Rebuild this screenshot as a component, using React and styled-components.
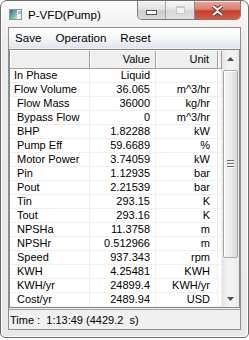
import React from 'react';
import styled, { createGlobalStyle } from 'styled-components';

const GlobalStyle = createGlobalStyle`
  html, body {
    margin: 0;
    padding: 0;
    background: #fff;
  }
  body {
    font-family: "Liberation Sans", Arial, sans-serif;
  }
`;

const rows = [
  { name: 'In Phase', value: 'Liquid', unit: '', indent: false },
  { name: 'Flow Volume', value: '36.065', unit: 'm^3/hr', indent: false },
  { name: 'Flow Mass', value: '36000', unit: 'kg/hr', indent: true },
  { name: 'Bypass Flow', value: '0', unit: 'm^3/hr', indent: true },
  { name: 'BHP', value: '1.82288', unit: 'kW', indent: true },
  { name: 'Pump Eff', value: '59.6689', unit: '%', indent: true },
  { name: 'Motor Power', value: '3.74059', unit: 'kW', indent: true },
  { name: 'Pin', value: '1.12935', unit: 'bar', indent: true },
  { name: 'Pout', value: '2.21539', unit: 'bar', indent: true },
  { name: 'Tin', value: '293.15', unit: 'K', indent: true },
  { name: 'Tout', value: '293.16', unit: 'K', indent: true },
  { name: 'NPSHa', value: '11.3758', unit: 'm', indent: true },
  { name: 'NPSHr', value: '0.512966', unit: 'm', indent: true },
  { name: 'Speed', value: '937.343', unit: 'rpm', indent: true },
  { name: 'KWH', value: '4.25481', unit: 'KWH', indent: true },
  { name: 'KWH/yr', value: '24899.4', unit: 'KWH/yr', indent: true },
  { name: 'Cost/yr', value: '2489.94', unit: 'USD', indent: true },
];

const Window = styled.div`
  box-sizing: border-box;
  width: 249px;
  height: 338px;
  border: 1px solid #6c6c6c;
  border-radius: 7px 7px 5px 5px;
  background: linear-gradient(#fbfbfb, #ececec 40px, #e9e9e9);
  box-shadow: inset 1px 1px 0 #fff, inset -1px -1px 0 #fff;
  padding: 0 7px 7px 7px;
  display: flex;
  flex-direction: column;
`;

const TitleBar = styled.div`
  height: 28px;
  display: flex;
  align-items: center;
`;

const AppIcon = styled.svg`
  margin-left: 1px;
  margin-top: 1px;
  flex: none;
`;

const Title = styled.span`
  margin-left: 6px;
  margin-top: 1px;
  font-size: 11.6px;
  color: #000;
  flex: 1;
`;

const CaptionGroup = styled.div`
  align-self: flex-start;
  display: flex;
  height: 18px;
  border: 1px solid #7a7a7a;
  border-top: none;
  border-radius: 0 0 5px 5px;
  overflow: hidden;
`;

const CaptionButton = styled.div`
  width: ${(p) => p.w}px;
  height: 18px;
  display: flex;
  align-items: center;
  justify-content: center;
  border-left: ${(p) => (p.first ? 'none' : '1px solid #8a8a8a')};
  background: ${(p) =>
    p.close
      ? 'linear-gradient(#eaa59b, #dd8272 45%, #c8402c 55%, #d35a44)'
      : 'linear-gradient(#f4f4f4, #e2e2e2 45%, #cdcdcd 55%, #d8d8d8)'};
  box-shadow: inset 0 1px 0 rgba(255, 255, 255, 0.7);
  opacity: ${(p) => (p.disabled ? 0.75 : 1)};
`;

const MinGlyph = styled.div`
  width: 9px;
  height: 3px;
  margin-top: 4px;
  background: #fff;
  border: 1px solid #555;
`;

const MaxGlyph = styled.div`
  width: 7px;
  height: 5px;
  border: 1px solid #b8b8b8;
  border-top-width: 2px;
  background: #f0f0f0;
`;

const Client = styled.div`
  flex: 1;
  display: flex;
  flex-direction: column;
  border: 1px solid #8e8f8f;
  background: #f0f0f0;
`;

const MenuBar = styled.div`
  height: 19px;
  display: flex;
  align-items: center;
  gap: 14px;
  padding-left: 6px;
  background: linear-gradient(#ffffff, #f6f7fa 50%, #e2e6ee);
  border-bottom: 1px solid #dfe3ea;
`;

const MenuItem = styled.span`
  font-size: 11.6px;
  color: #000;
`;

const ListView = styled.div`
  flex: 1;
  display: flex;
  margin-top: 1px;
  border: 1px solid #828790;
  background: #fff;
`;

const Table = styled.div`
  flex: 1;
  display: flex;
  flex-direction: column;
`;

const HeaderRow = styled.div`
  display: grid;
  grid-template-columns: 80px 66px 62px 1fr;
  height: 17px;
  border-bottom: 1px solid #a0a0a0;
  border-top: 1px solid #fff;
  background: #efefef;
`;

const HeaderCell = styled.div`
  font-size: 11px;
  line-height: 17px;
  text-align: right;
  padding-right: ${(p) => p.pad || 0}px;
  border-right: 1px solid #a0a0a0;
  box-shadow: inset 1px 0 0 #fff;
  color: #000;
`;

const Row = styled.div`
  display: grid;
  grid-template-columns: 80px 66px 62px 1fr;
  height: 14px;
`;

const Cell = styled.div`
  box-sizing: border-box;
  font-size: 11px;
  line-height: 13px;
  color: #000;
  white-space: nowrap;
  overflow: hidden;
  border-right: 1px solid #f0f0f0;
  border-bottom: 1px solid #f0f0f0;
  text-align: ${(p) => (p.right ? 'right' : 'left')};
  padding-left: ${(p) => p.left || 0}px;
  padding-right: ${(p) => p.pad || 0}px;
`;

const ScrollBar = styled.div`
  width: 17px;
  display: flex;
  flex-direction: column;
  background: linear-gradient(90deg, #e3e3e3, #f2f2f2 30%, #f2f2f2 70%, #e8e8e8);
`;

const ArrowButton = styled.div`
  height: 17px;
  display: flex;
  align-items: center;
  justify-content: center;
`;

const Track = styled.div`
  flex: 1;
  display: flex;
  flex-direction: column;
`;

const Thumb = styled.div`
  margin: 3px 1px 0 1px;
  height: 186px;
  border: 1px solid #a7a7a7;
  border-radius: 2px;
  background: linear-gradient(90deg, #f2f2f2, #ebebeb 50%, #d9d9d9);
  box-shadow: inset 1px 1px 0 #fff;
  display: flex;
  flex-direction: column;
  align-items: center;
  justify-content: center;
  gap: 1px;
`;

const Grip = styled.div`
  width: 7px;
  height: 1px;
  background: #6a6a6a;
  border-bottom: 1px solid #fff;
`;

const StatusBar = styled.div`
  height: 18px;
  display: flex;
  align-items: center;
  padding-left: 1px;
  padding-top: 1px;
  border-top: 1px solid #a0a0a0;
  margin-top: 1px;
  font-size: 11px;
  white-space: pre;
  color: #000;
`;

const Arrow = ({ up }) => (
  <svg width="7" height="4" viewBox="0 0 7 4">
    <path d={up ? 'M0 4 L3.5 0 L7 4 Z' : 'M0 0 L3.5 4 L7 0 Z'} fill="#4d4d4d" />
  </svg>
);

const App = () => (
  <>
    <GlobalStyle />
    <Window>
      <TitleBar>
        <AppIcon width="13" height="11" viewBox="0 0 13 11">
          <defs>
            <linearGradient id="ic" x1="0" y1="0" x2="1" y2="1">
              <stop offset="0" stopColor="#2b6f8f" />
              <stop offset="0.6" stopColor="#79b9a8" />
              <stop offset="1" stopColor="#bcd9e8" />
            </linearGradient>
          </defs>
          <rect x="0.5" y="0.5" width="12" height="10" fill="#eef1f3" stroke="#8a96a0" />
          <rect x="1" y="1" width="7" height="9" fill="url(#ic)" />
          <rect x="9" y="2" width="3" height="3" fill="#9fc4d6" />
        </AppIcon>
        <Title>P-VFD(Pump)</Title>
        <CaptionGroup>
          <CaptionButton w={27} first>
            <MinGlyph />
          </CaptionButton>
          <CaptionButton w={28} disabled>
            <MaxGlyph />
          </CaptionButton>
          <CaptionButton w={45} close>
            <svg width="13" height="11" viewBox="0 0 13 11">
              <path
                d="M2 1 L6.5 4.5 L11 1 M2 10 L6.5 6.5 L11 10"
                stroke="#5a2a22"
                strokeWidth="4"
                fill="none"
              />
              <path
                d="M2 1 L6.5 4.5 L11 1 M2 10 L6.5 6.5 L11 10"
                stroke="#fff"
                strokeWidth="2.2"
                fill="none"
              />
            </svg>
          </CaptionButton>
        </CaptionGroup>
      </TitleBar>
      <Client>
        <MenuBar>
          <MenuItem>Save</MenuItem>
          <MenuItem>Operation</MenuItem>
          <MenuItem>Reset</MenuItem>
        </MenuBar>
        <ListView>
          <Table>
            <HeaderRow>
              <HeaderCell />
              <HeaderCell pad={5}>Value</HeaderCell>
              <HeaderCell pad={8}>Unit</HeaderCell>
              <HeaderCell />
            </HeaderRow>
            {rows.map((r) => (
              <Row key={r.name}>
                <Cell left={r.indent ? 7 : 4}>{r.name}</Cell>
                <Cell right pad={5}>{r.value}</Cell>
                <Cell right pad={7}>{r.unit}</Cell>
                <Cell />
              </Row>
            ))}
          </Table>
          <ScrollBar>
            <ArrowButton>
              <Arrow up />
            </ArrowButton>
            <Track>
              <Thumb>
                <Grip />
                <Grip />
                <Grip />
              </Thumb>
            </Track>
            <ArrowButton>
              <Arrow />
            </ArrowButton>
          </ScrollBar>
        </ListView>
        <StatusBar>{'Time :  1:13:49 (4429.2  s)'}</StatusBar>
      </Client>
    </Window>
  </>
);

export default App;
